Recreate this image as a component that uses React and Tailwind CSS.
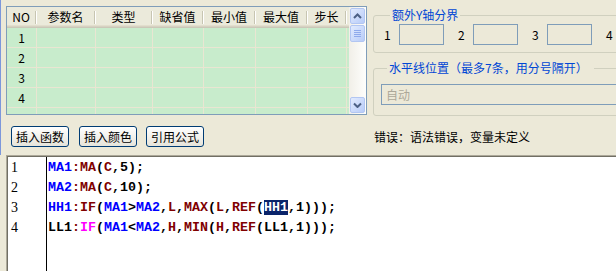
const cols = [
  { t: 'NO', w: 30 },
  { t: '参数名', w: 59 },
  { t: '类型', w: 57 },
  { t: '缺省值', w: 51 },
  { t: '最小值', w: 52 },
  { t: '最大值', w: 52 },
  { t: '步长', w: 39 },
];

function Chevron({ down }) {
  return (
    <svg width="9" height="6" viewBox="0 0 9 6">
      <polyline
        points={down ? '1,1.5 4.5,5 8,1.5' : '1,5 4.5,1.5 8,5'}
        fill="none"
        stroke="#4D6185"
        strokeWidth="2"
      />
    </svg>
  );
}

function ScrollBtn({ down }) {
  return (
    <div className="w-[15px] h-[16px] mx-auto rounded-[2px] border border-[#B2C6F2] bg-gradient-to-br from-[#E2EBFE] to-[#B8CCF8] flex items-center justify-center">
      <Chevron down={down} />
    </div>
  );
}

function Table() {
  return (
    <div className="w-[361px] h-[109px] border border-[#7F9DB9] flex shrink-0 overflow-hidden">
      <div className="w-[342px] flex flex-col">
        <div className="h-[21px] flex flex-col bg-[#EBEADB]">
          <div className="h-[18px] flex">
            {cols.map((c, i) => (
              <div key={i} className="flex items-center" style={{ width: c.w }}>
                <div className="flex-1 text-center leading-[18px] pt-[2px]">{c.t}</div>
                <div className="w-[2px] h-[13px] border-l border-r border-l-[#C7C5B2] border-r-white mt-[2px]" />
              </div>
            ))}
          </div>
          <div className="h-[1px] bg-[#E2DECD]" />
          <div className="h-[1px] bg-[#D6D2C2]" />
          <div className="h-[1px] bg-[#CBC7B8]" />
        </div>
        {[1, 2, 3, 4, ''].map((n, r) => (
          <div key={r} className={r < 4 ? 'h-[20px] flex border-b border-[#E9E6D2] bg-[#C8ECCC]' : 'h-[6px] flex bg-[#C8ECCC]'}>
            {cols.map((c, i) => (
              <div
                key={i}
                className="border-r border-[#E9E6D2] flex items-center justify-center leading-[19px]"
                style={{ width: c.w }}
              >
                {i === 0 ? n : ''}
              </div>
            ))}
          </div>
        ))}
      </div>
      <div className="w-[17px] flex flex-col bg-gradient-to-r from-[#F1EFE8] to-[#FEFEFC] py-[1px]">
        <ScrollBtn />
        <div className="w-[15px] h-[17px] mx-auto mt-[1px] rounded-[2px] border border-[#B2C6F2] bg-gradient-to-br from-[#E2EBFE] to-[#B8CCF8] flex flex-col items-center justify-center gap-[1px]">
          <div className="w-[7px] h-[1px] bg-[#8FAAEC]" />
          <div className="w-[7px] h-[1px] bg-[#8FAAEC]" />
          <div className="w-[7px] h-[1px] bg-[#8FAAEC]" />
          <div className="w-[7px] h-[1px] bg-[#8FAAEC]" />
        </div>
        <div className="mt-auto">
          <ScrollBtn down />
        </div>
      </div>
    </div>
  );
}

function RightPanel() {
  return (
    <div className="ml-[6px] mt-[1px] flex flex-col shrink-0">
      <fieldset className="w-[270px] border border-[#D0D0BF] rounded-[3px] pt-[1px] pb-[7px] pl-[10px]">
        <legend className="ml-[6px] px-[2px] leading-[16px] text-[#0046D5]">额外Y轴分界</legend>
        <div className="flex gap-[14px]">
          {['1', '2', '3', '4'].map((n) => (
            <div key={n} className="flex items-center">
              <span className="w-[15px] leading-[21px]">{n}</span>
              <div className="w-[45px] h-[21px] border border-[#7F9DB9] bg-[#ECE9D8]" />
            </div>
          ))}
        </div>
      </fieldset>
      <fieldset className="w-[270px] mt-[7px] border border-[#D0D0BF] rounded-[3px] pt-[8px] pb-[10px] pl-[7px]">
        <legend className="ml-[6px] px-[2px] pr-[6px] leading-[16px] text-[#0046D5]">水平线位置（最多7条，用分号隔开）</legend>
        <div className="h-[21px] border border-[#7F9DB9] bg-[#ECE9D8] text-[#ACA899] pl-[4px] leading-[19px]">自动</div>
      </fieldset>
    </div>
  );
}

const B = ({ children }) => <span className="text-[#0000FF]">{children}</span>;
const R = ({ children }) => <span className="text-[#800000]">{children}</span>;
const M = ({ children }) => <span className="text-[#FF00FF]">{children}</span>;
const S = ({ children }) => <span className="bg-[#0A246A] text-white">{children}</span>;

function Editor() {
  return (
    <div className="ml-[6px] flex-1 flex border-t border-l border-[#ACA899]">
      <div className="flex-1 flex border-t border-l border-[#716F64] bg-white">
        <div className="w-[39px] border-r border-black pl-[3px] pt-[1px] font-['Liberation_Serif',serif] text-[14px] leading-[20px]">
          <div>1</div>
          <div>2</div>
          <div>3</div>
          <div>4</div>
        </div>
        <div className="pl-[1px] pt-[1px] font-['Liberation_Mono',monospace] font-bold text-[13.333px] leading-[20px] whitespace-pre">
          <div>
            <B>MA1</B><R>:</R><R>MA</R>(<R>C</R>,5);
          </div>
          <div>
            <B>MA2</B><R>:</R><R>MA</R>(<R>C</R>,10);
          </div>
          <div>
            <B>HH1</B><R>:</R><R>IF</R>(<B>MA1</B>&gt;<B>MA2</B>,<R>L</R>,<R>MAX</R>(<R>L</R>,<R>REF</R>(<S>HH1</S>,1)));
          </div>
          <div>
            LL1<R>:</R><M>IF</M>(<B>MA1</B>&lt;<B>MA2</B>,<R>H</R>,<R>MIN</R>(<R>H</R>,<R>REF</R>(LL1,1)));
          </div>
        </div>
      </div>
    </div>
  );
}

function Btn({ children, className = '' }) {
  return (
    <div className={'w-[58px] h-[21px] rounded-[3px] border border-[#003C74] bg-gradient-to-b from-white to-[#E6E4DA] flex items-center justify-center leading-[19px] ' + className}>
      {children}
    </div>
  );
}

export default function App() {
  return (
    <div className="w-[616px] h-[271px] bg-[#ECE9D8] overflow-hidden flex flex-col font-['Noto_Sans_CJK_SC',sans-serif] text-[12px] text-black">
      <div className="h-[155px] shrink-0 border-l border-[#7C97DB] flex flex-col">
        <div className="flex h-[115px] pt-[6px] pl-[5px] items-start">
          <Table />
          <RightPanel />
        </div>
        <div className="flex items-center pl-[10px] mt-[11px]">
          <Btn>插入函数</Btn>
          <Btn className="ml-[10px]">插入颜色</Btn>
          <Btn className="ml-[9px]">引用公式</Btn>
          <span className="ml-[170px] leading-[21px]">错误：语法错误，变量未定义</span>
        </div>
      </div>
      <Editor />
    </div>
  );
}
